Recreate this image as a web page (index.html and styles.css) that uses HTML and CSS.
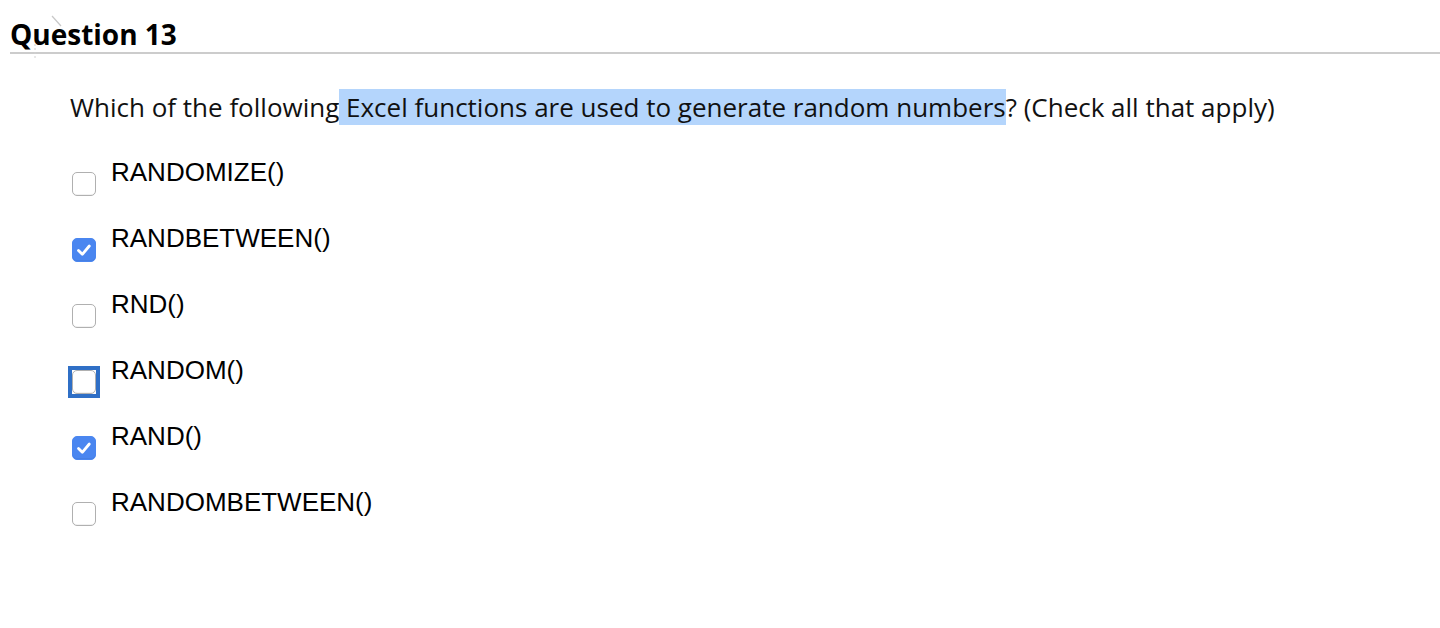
FILE: index.html
```html
<!DOCTYPE html>
<html>
<head>
<meta charset="utf-8">
<link rel="stylesheet" href="styles.css">
</head>
<body>
<div class="page">
  <h2 class="title">Question 13</h2>
  <svg class="artifact" width="40" height="45" viewBox="0 0 40 45"><path d="M22 2 L31 12" stroke="#c8c8c8" stroke-width="1.2" fill="none"/><path d="M5 30 L5 44" stroke="#d0d0d0" stroke-width="1" stroke-dasharray="2 2" fill="none"/></svg>
  <div class="question">
    <p class="prompt">Which of the following<span class="sel"> Excel functions are used to generate random numbers</span>? (Check all that apply)</p>
    <ul class="options">
      <li class="option"><span class="box"></span><span class="label">RANDOMIZE()</span></li>
      <li class="option"><span class="box checked"><svg viewBox="0 0 24 24" width="24" height="24"><path d="M6.5 12.5 L10.3 16.3 L17.3 8" fill="none" stroke="#fff" stroke-width="2.8" stroke-linecap="round" stroke-linejoin="round"/></svg></span><span class="label">RANDBETWEEN()</span></li>
      <li class="option"><span class="box"></span><span class="label">RND()</span></li>
      <li class="option"><span class="box focused"></span><span class="label">RANDOM()</span></li>
      <li class="option"><span class="box checked"><svg viewBox="0 0 24 24" width="24" height="24"><path d="M6.5 12.5 L10.3 16.3 L17.3 8" fill="none" stroke="#fff" stroke-width="2.8" stroke-linecap="round" stroke-linejoin="round"/></svg></span><span class="label">RAND()</span></li>
      <li class="option"><span class="box"></span><span class="label">RANDOMBETWEEN()</span></li>
    </ul>
  </div>
</div>
</body>
</html>
```
FILE: styles.css
```css
html, body {
  margin: 0;
  padding: 0;
  background: #fff;
}
.page {
  position: relative;
  padding: 16px 0 0 10px;
  font-family: "Open Sans", sans-serif;
  color: #000;
  min-height: 600px;
}
.artifact {
  position: absolute;
  left: 30px;
  top: 14px;
}
.title {
  margin: 0;
  font-size: 28px;
  font-weight: 700;
  line-height: 36px;
  border-bottom: 2px solid #cccccc;
}
.question {
  padding: 35px 0 0 60px;
}
.prompt {
  margin: 0;
  font-size: 26px;
  line-height: 36px;
  color: #111;
}
.sel {
  background: #b4d5fc;
}
.options {
  list-style: none;
  margin: 35px 0 0 0;
  padding: 0;
  display: flex;
  flex-direction: column;
}
.option {
  display: flex;
  align-items: flex-start;
  height: 66px;
}
.box {
  box-sizing: border-box;
  width: 24px;
  height: 24px;
  margin: 12px 15px 0 2px;
  border: 1px solid #b0b0b0;
  border-radius: 5px;
  background: #fff;
  flex: none;
  position: relative;
  box-shadow: inset 0 -1px 0 rgba(0,0,0,0.05);
}
.box svg {
  position: absolute;
  left: -1px;
  top: -1px;
}
.box.checked {
  background: #4a86f0;
  border-color: #4a86f0;
}
.box.focused::before {
  content: "";
  position: absolute;
  left: -5px;
  top: -5px;
  right: -5px;
  bottom: -5px;
  border: 4px solid #2f6fc6;
}
.label {
  font-family: "Liberation Sans", Arial, sans-serif;
  font-size: 26px;
  line-height: 24px;
  color: #000;
}
```
